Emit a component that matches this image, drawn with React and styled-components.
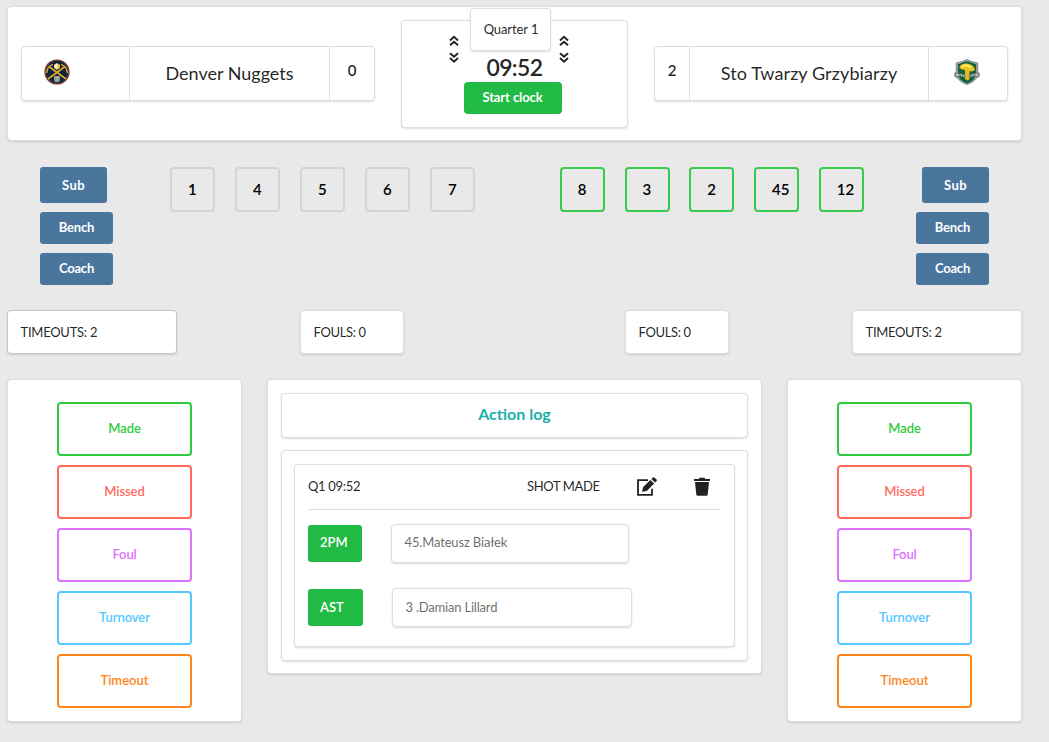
import React from 'react';
import styled, { createGlobalStyle } from 'styled-components';

const GlobalStyle = createGlobalStyle`
  * { box-sizing: border-box; }
  html { font-size: 13px; }
  body {
    margin: 0;
    background: #e9e9e9;
    color: rgba(0, 0, 0, 0.87);
    font-family: Lato, 'Liberation Sans', sans-serif;
    font-size: 13px;
    line-height: 18px;
  }
  button { font-family: inherit; margin: 0; padding: 0; cursor: pointer; }
`;

const Page = styled.main`
  width: 1049px;
  height: 742px;
  padding: 6px 27px 0 7px;
  overflow: hidden;
`;

const Segment = styled.section`
  background: #fff;
  border: 1px solid ${(p) => (p.$strong ? '#c6c7c8' : '#dededf')};
  border-radius: 4px;
  box-shadow: 0 1px 2px 0 rgba(34, 36, 38, 0.15);
`;

const Text = styled.span`
  letter-spacing: ${(p) => p.$spacing || 0}px;
  white-space: pre;
`;

const Scoreboard = styled(Segment)`
  display: flex;
  justify-content: space-between;
  align-items: flex-start;
  height: 135px;
  padding: 13px 13px 0;
`;

const TeamBox = styled(Segment)`
  display: grid;
  grid-template-columns: ${(p) => p.$columns};
  width: 354px;
  height: 55px;
  margin-top: 26px;
`;

const TeamCell = styled.div`
  display: flex;
  justify-content: center;
  padding-top: ${(p) => p.$top}px;
  padding-right: ${(p) => p.$shift || 0}px;
  & + & { border-left: 1px solid #dededf; }
`;

const TeamName = styled(Text)`
  font-size: 18px;
  line-height: 24px;
`;

const Score = styled(Text)`
  font-size: 15px;
  font-weight: 600;
`;

const ClockPanel = styled(Segment)`
  display: flex;
  justify-content: center;
  width: 227px;
  height: 108px;
  padding-right: 12px;
`;

const ClockColumn = styled.div`
  display: flex;
  flex-direction: column;
  align-items: center;
  width: 98px;
  margin: -13px 3px 0 0;
`;

const Quarter = styled(Segment)`
  width: 81px;
  height: 43px;
  padding: 11px 0 0 1px;
  margin-left: -4px;
  text-align: center;
`;

const Time = styled.div`
  height: 31px;
  padding: 2px 0 0 4px;
  font-size: 23px;
  font-weight: 600;
  line-height: 28px;
`;

const StartButton = styled.button`
  width: 98px;
  height: 32px;
  padding-bottom: 2px;
  border: 0;
  border-radius: 4px;
  background: #21ba45;
  color: #fff;
  font-size: 13px;
  font-weight: 700;
`;

const Adjuster = styled.div`
  display: flex;
  flex-direction: column;
  gap: 5px;
  width: 10px;
  padding-top: 14px;
  margin: ${(p) => (p.$right ? '0 0 0 -6px' : '0 5px 0 0')};
  svg { display: block; }
`;

const PlayersRow = styled.section`
  display: grid;
  grid-template-columns: 130px 305px 84.8px 304px 1fr;
  height: 169px;
  padding: 26px 33px 0 33px;
`;

const SideButtons = styled.div`
  display: flex;
  flex-direction: column;
  align-items: ${(p) => (p.$right ? 'flex-end' : 'flex-start')};
  gap: 9px;
`;

const SideButton = styled.button`
  width: ${(p) => (p.$tall ? 67 : 73)}px;
  height: ${(p) => (p.$tall ? 36 : 32)}px;
  padding-bottom: ${(p) => (p.$tall ? 0 : 2)}px;
  border: 0;
  border-radius: 3px;
  background: #4a769e;
  color: #fff;
  font-size: 13px;
  font-weight: 700;
`;

const Lineup = styled.div`
  display: flex;
  justify-content: space-between;
`;

const PlayerTile = styled.button`
  width: 45px;
  height: 45px;
  padding: 0 0 2px 16px;
  border: 2px solid ${(p) => (p.$active ? '#39cc4c' : '#d4d4d5')};
  border-radius: 4px;
  background: transparent;
  color: #000;
  font-size: 15px;
  font-weight: 600;
  text-align: left;
`;

const Counters = styled.section`
  display: flex;
  height: 69px;
`;

const Counter = styled(Segment)`
  width: ${(p) => p.$width}px;
  height: 44px;
  margin-left: ${(p) => p.$gap || 0}px;
  padding: 12px 12.5px;
`;

const Board = styled.section`
  display: flex;
  align-items: flex-start;
  justify-content: space-between;
`;

const Actions = styled(Segment)`
  display: flex;
  flex-direction: column;
  gap: 9px;
  width: 235px;
  height: 343px;
  padding: 22px 49px 0;
`;

const ActionButton = styled.button`
  height: 54px;
  padding: 0 0 3px;
  border: 2px solid ${(p) => p.$color};
  border-radius: 4px;
  background: #fff;
  color: ${(p) => p.$color};
  font-size: 13px;
  font-weight: 600;
`;

const Log = styled(Segment)`
  width: 495px;
  height: 295px;
  padding: 13px;
`;

const LogTitle = styled(Segment)`
  height: 45px;
  margin-bottom: 12px;
  padding-top: 10px;
  color: #1caeab;
  font-size: 16px;
  font-weight: 700;
  line-height: 20px;
  text-align: center;
`;

const LogBody = styled(Segment)`
  height: 211px;
  padding: 13px 12px;
`;

const Entry = styled(Segment)`
  height: 183px;
  padding: 0 13px;
`;

const EntryHeader = styled.header`
  display: grid;
  grid-template-columns: 219px 109px 57px 1fr;
  height: 45px;
  padding-top: 12px;
  border-bottom: 1px solid #dededf;
  svg { display: block; margin-top: -0.5px; }
`;

const EntryRow = styled.div`
  display: flex;
  align-items: center;
  height: 39px;
  margin-top: ${(p) => p.$top}px;
`;

const Tag = styled.div`
  width: ${(p) => p.$width}px;
  height: 37px;
  padding: ${(p) => p.$textTop}px 12px 0;
  border-radius: 3px;
  background: #21ba45;
  color: #fff;
  font-weight: 600;
`;

const PlayerField = styled(Segment)`
  width: ${(p) => p.$width}px;
  height: 39px;
  margin-left: 29px;
  padding: ${(p) => p.$textTop}px 12.5px 0;
  color: rgba(0, 0, 0, 0.6);
`;

const DoubleChevron = ({ down }) => (
  <svg width="10" height="12" viewBox="0 0 10 12" fill="none" stroke="#222" strokeWidth="1.9">
    <path d={down ? 'M1 1.2 5 4.8 9 1.2M1 6 5 9.6 9 6' : 'M1 5.5 5 1.9 9 5.5M1 10.3 5 6.7 9 10.3'} />
  </svg>
);

const EditIcon = () => (
  <svg width="22" height="20" viewBox="0 0 22 20">
    <path d="M12 3.2H2v14.6h14v-6" fill="none" stroke="#222" strokeWidth="1.8" />
    <path d="M7.2 9.9 14.4 2.9 18.2 6.6 11 13.8 6 15Z" fill="#222" />
    <path d="M15.4 2 17 .6Q17.8 0 18.6.7L20.6 2.6Q21.3 3.4 20.6 4.1L19 5.6Z" fill="#222" />
  </svg>
);

const TrashIcon = () => (
  <svg width="18" height="20" viewBox="0 0 18 20" fill="#222">
    <path d="M1 2h5V1.6Q6 .8 7 .8h4q1 0 1 .8V2h5v2H1Z" />
    <path d="M2 5h14l-1.3 12.5q-.2 1.3-1.4 1.3H4.7q-1.2 0-1.4-1.3Z" />
  </svg>
);

const NuggetsLogo = () => (
  <svg width="26" height="26" viewBox="0 0 26 26">
    <circle cx="13" cy="13" r="12.6" fill="#7c2a2c" />
    <circle cx="13" cy="13" r="11.6" fill="#a87435" />
    <circle cx="13" cy="13" r="11.2" fill="#0d2340" />
    <path d="M4 20 21 7.5M22 20 5 7.5" stroke="#dfae25" strokeWidth="1.6" />
    <path d="M2.8 14Q2.8 7.5 9 5.4M23.2 14Q23.2 7.5 17 5.4" fill="none" stroke="#d5a62b" strokeWidth="1.5" />
    <path d="M10 6 13 4l3 2v2.7L13 11l-3-2.3Z" fill="#f6cb4d" />
    <path d="M10.5 6.2 13 4.6v5l-2.5-1.4Z" fill="#fff" />
    <path d="M10 17h6v4l-1 2h-4l-1-2Z" fill="#8699ad" />
    <path d="M11 18.3h4M13 17v5" stroke="#c9ae5e" strokeWidth="1" />
  </svg>
);

const MushroomLogo = () => (
  <svg width="26" height="26" viewBox="0 0 26 26">
    <path d="M2.2 4 8.5 2.4 13 .4l4.5 2L23.8 4v8.4q2 2 1.6 4.8l-2.4 1.6Q20 23 13 25.6 6 23 3 18.8L.6 17.2Q.2 14.4 2.2 12.4Z" fill="#a4adb5" stroke="#6c7584" strokeWidth=".8" />
    <path d="M3.8 5.2 8 3.8Q13 .8 18 3.8l4.2 1.4v10Q21 21.5 13 24.4 5 21.5 3.8 15.2Z" fill="#176038" />
    <path d="M11 11h4.5v9l-2 1.6-2.5-1.6Z" fill="#e7bd24" />
    <path d="M5.2 8.6Q7 4.4 13 4.6q6.5.8 8 6.2-2.4 2.4-6 1.2-2-.9-4-1Q7.2 11.3 5.2 8.6Z" fill="#f0c722" />
    <path d="M7.5 7.8q4.5-3 9 .6" stroke="#ffe95e" strokeWidth="2.2" fill="none" />
    <path d="m1.2 14.4 5 .3 5 1.2v2.3l-4.2-.9-5 .2ZM24.8 14.4l-5 .3-4.6 1.2v2.3l3.8-.9 5 .2Z" fill="#bfc8cf" stroke="#52645f" strokeWidth=".6" />
    <path d="m4.5 17 1.2-1.4 1.2 1.4m2 0v-1.2m8 1.2v-1.2m2.2 1.2 1.2-1.4 1.2 1.4" stroke="#3c514b" strokeWidth=".8" fill="none" />
  </svg>
);

const ACTIONS = [
  ['Made', '#2ecc40', -0.1],
  ['Missed', '#ff695e', -0.1],
  ['Foul', '#dc73ff', -0.1],
  ['Turnover', '#54c8ff', -0.05],
  ['Timeout', '#ff851b', 0],
];

const ActionPanel = () => (
  <Actions>
    {ACTIONS.map(([label, color, spacing]) => (
      <ActionButton key={label} $color={color}><Text $spacing={spacing}>{label}</Text></ActionButton>
    ))}
  </Actions>
);

const BenchControls = ({ right }) => (
  <SideButtons $right={right}>
    <SideButton $tall><Text $spacing={0.4}>Sub</Text></SideButton>
    <SideButton><Text $spacing={-0.2}>Bench</Text></SideButton>
    <SideButton><Text $spacing={-0.2}>Coach</Text></SideButton>
  </SideButtons>
);

const Players = ({ numbers, active }) => (
  <Lineup>
    {numbers.map((n) => <PlayerTile key={n} $active={active}>{n}</PlayerTile>)}
  </Lineup>
);

export default function App() {
  return (
    <>
      <GlobalStyle />
      <Page>
        <Scoreboard>
          <TeamBox $columns="107px 200px 1fr">
            <TeamCell $top={12} $shift={38}><NuggetsLogo /></TeamCell>
            <TeamCell $top={14}><TeamName>Denver Nuggets</TeamName></TeamCell>
            <TeamCell $top={14}><Score>0</Score></TeamCell>
          </TeamBox>
          <ClockPanel>
            <Adjuster><DoubleChevron /><DoubleChevron down /></Adjuster>
            <ClockColumn>
              <Quarter><Text $spacing={-0.1}>Quarter 1</Text></Quarter>
              <Time><Text $spacing={-0.6}>09:52</Text></Time>
              <StartButton><Text $spacing={-0.1}>Start clock</Text></StartButton>
            </ClockColumn>
            <Adjuster $right><DoubleChevron /><DoubleChevron down /></Adjuster>
          </ClockPanel>
          <TeamBox $columns="34px 239px 1fr">
            <TeamCell $top={14}><Score>2</Score></TeamCell>
            <TeamCell $top={14}><TeamName $spacing={0.1}>Sto Twarzy Grzybiarzy</TeamName></TeamCell>
            <TeamCell $top={12} $shift={3}><MushroomLogo /></TeamCell>
          </TeamBox>
        </Scoreboard>

        <PlayersRow>
          <BenchControls />
          <Players numbers={[1, 4, 5, 6, 7]} />
          <span />
          <Players numbers={[8, 3, 2, 45, 12]} active />
          <BenchControls right />
        </PlayersRow>

        <Counters>
          <Counter $width={170} $strong><Text $spacing={-0.25}>TIMEOUTS: 2</Text></Counter>
          <Counter $width={104} $gap={123}><Text $spacing={-0.35}>FOULS: 0</Text></Counter>
          <Counter $width={104} $gap={221}><Text $spacing={-0.35}>FOULS: 0</Text></Counter>
          <Counter $width={170} $gap={123}><Text $spacing={-0.3}>TIMEOUTS: 2</Text></Counter>
        </Counters>

        <Board>
          <ActionPanel />
          <Log>
            <LogTitle><Text>Action log</Text></LogTitle>
            <LogBody>
              <Entry>
                <EntryHeader>
                  <Text $spacing={-0.3}>Q1 09:52</Text>
                  <Text $spacing={-0.35}>SHOT MADE</Text>
                  <EditIcon />
                  <TrashIcon />
                </EntryHeader>
                <EntryRow $top={14}>
                  <Tag $width={54} $textTop={8}><Text>2PM</Text></Tag>
                  <PlayerField $width={238} $textTop={8}><Text $spacing={-0.15}>45.Mateusz Białek</Text></PlayerField>
                </EntryRow>
                <EntryRow $top={25}>
                  <Tag $width={55} $textTop={9}><Text>AST</Text></Tag>
                  <PlayerField $width={240} $textTop={9}><Text $spacing={-0.2}>3 .Damian Lillard</Text></PlayerField>
                </EntryRow>
              </Entry>
            </LogBody>
          </Log>
          <ActionPanel />
        </Board>
      </Page>
    </>
  );
}
